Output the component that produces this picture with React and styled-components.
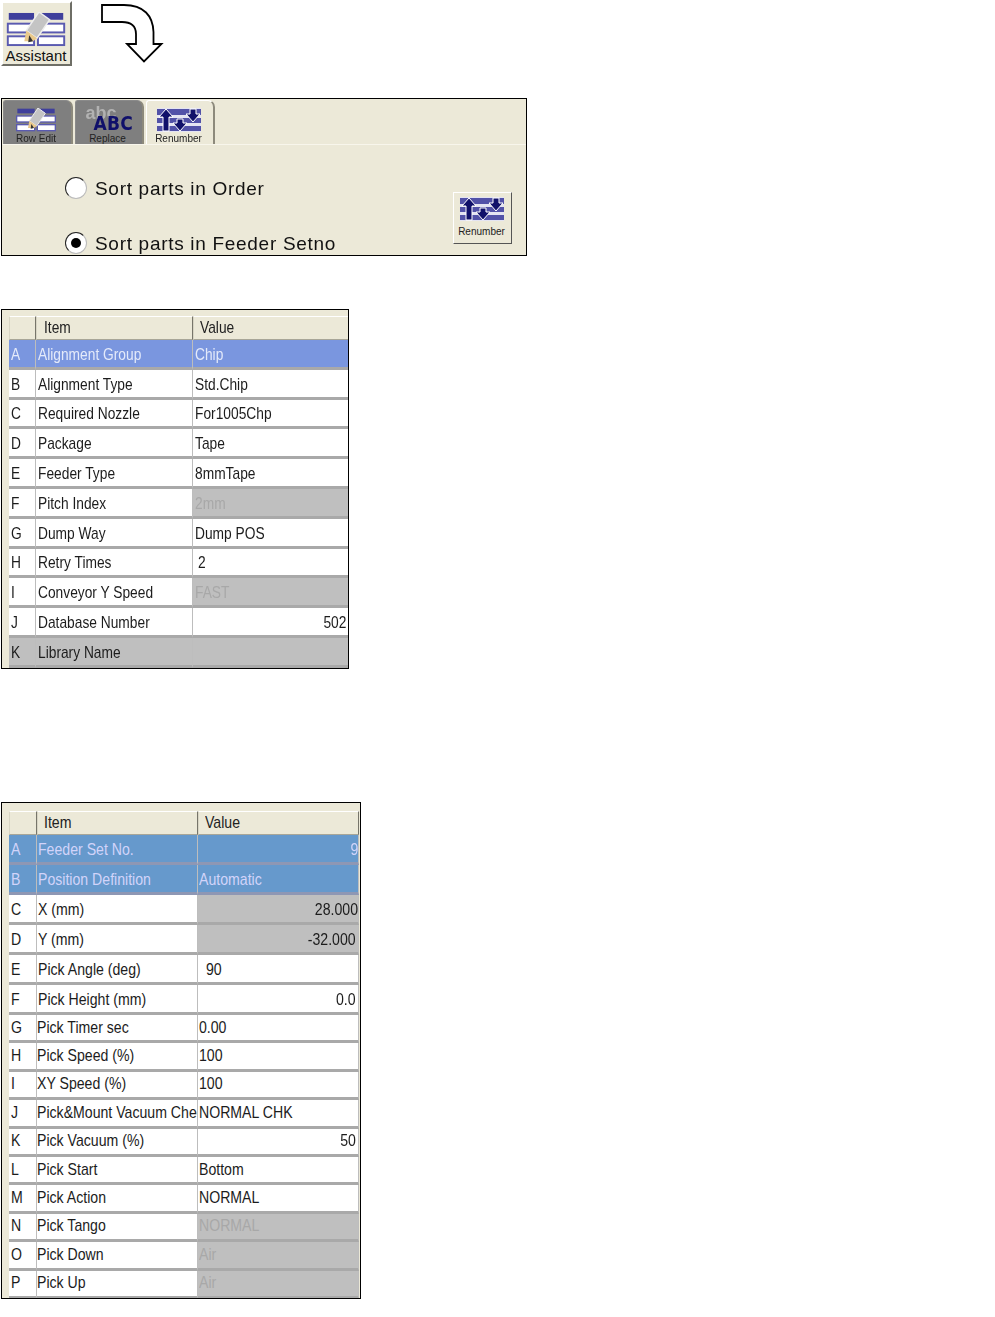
import React from 'react'
import styled, { createGlobalStyle } from 'styled-components'

const GlobalStyle = createGlobalStyle`
  html, body {
    margin: 0;
    padding: 0;
    background: #fff;
    font-family: "Liberation Sans", Arial, sans-serif;
  }
`

const Page = styled.div`
  width: 995px;
  height: 1317px;
  overflow: hidden;
  padding: 1px 0 0 1px;
  box-sizing: border-box;
  display: flex;
  flex-direction: column;
  align-items: flex-start;
  filter: blur(0.35px);
`

const TopRow = styled.div`
  display: flex;
  align-items: flex-start;
  gap: 28px;
  height: 65px;
  margin-bottom: 32px;
`

const AssistantButton = styled.div`
  width: 71px;
  height: 65px;
  box-sizing: border-box;
  background: #ece9d8;
  border: 2px solid;
  border-color: #fff #6e6e66 #6e6e66 #fff;
  display: flex;
  flex-direction: column;
  align-items: center;
  padding: 9px 1px 0 0;
  color: #111;
  font-size: 15px;
  line-height: 17px;
`

const ArrowWrap = styled.svg`
  display: block;
  margin-top: 1px;
`

const Panel = styled.div`
  width: 526px;
  height: 158px;
  box-sizing: border-box;
  border: 1px solid #000;
  background: #ece9d8;
  margin-bottom: 53px;
  overflow: hidden;
`

const TabBar = styled.div`
  height: 46px;
  box-sizing: border-box;
  padding: 2px 0 0 1px;
  display: flex;
  align-items: flex-end;
  gap: 2px;
  border-bottom: 1px solid #f8f6ec;
`

const Tab = styled.div`
  position: relative;
  width: ${p => p.$width}px;
  height: 44px;
  box-sizing: border-box;
  background: ${p => (p.$active ? '#ece9d8' : '#7f7f7f')};
  border-radius: 3px 7px 0 0;
  border-top: 1px solid ${p => (p.$active ? '#fff' : '#8a8a8a')};
  border-left: 1px solid ${p => (p.$active ? '#fff' : '#8a8a8a')};
  border-right: 2px solid #8d8a7c;
  display: flex;
  flex-direction: column;
  align-items: center;
  padding: 7px 3px 0 0;
  color: #222;
  font-size: 10px;
  line-height: 11px;
`

const TabIcon = styled.div`
  height: 24px;
  margin-bottom: 1px;
`

const AbcIcon = styled.div`
  position: relative;
  width: 54px;
  height: 24px;
  margin-bottom: 1px;
`

const AbcSmall = styled.span`
  position: absolute;
  left: 5px;
  top: -3px;
  font-size: 18px;
  line-height: 17px;
  font-weight: bold;
  color: #b2b2b2;
`

const AbcBig = styled.span`
  position: absolute;
  left: 13px;
  top: 5px;
  font-family: "DejaVu Sans Condensed", "DejaVu Sans", sans-serif;
  font-size: 19px;
  line-height: 20px;
  font-weight: bold;
  letter-spacing: 0.3px;
  color: #10106a;
`

const PanelBody = styled.div`
  display: flex;
  justify-content: space-between;
  padding: 32px 14px 0 63px;
`

const RadioList = styled.div`
  display: flex;
  flex-direction: column;
  gap: 33px;
`

const RadioRow = styled.div`
  display: flex;
  align-items: center;
  gap: 8px;
  height: 22px;
  font-size: 19px;
  letter-spacing: 0.7px;
  color: #111;
`

const RadioLabel = styled.span`
  position: relative;
  top: 1px;
`

const RadioCircle = styled.span`
  width: 22px;
  height: 22px;
  box-sizing: border-box;
  border-radius: 50%;
  background: #fff;
  border: 1.5px solid #222;
  border-bottom-color: #bbb;
  border-right-color: #bbb;
  display: flex;
  align-items: center;
  justify-content: center;
  &::after {
    content: '';
    display: ${p => (p.$checked ? 'block' : 'none')};
    width: 10px;
    height: 10px;
    border-radius: 50%;
    background: #000;
  }
`

const RenumberButton = styled.div`
  width: 59px;
  height: 52px;
  margin-top: 15px;
  box-sizing: border-box;
  background: #ece9d8;
  border: 1px solid;
  border-color: #fff #555 #555 #fff;
  display: flex;
  flex-direction: column;
  align-items: center;
  padding: 4px 2px 0 0;
  font-size: 10px;
  line-height: 11px;
  color: #222;
`

const ButtonIcon = styled.div`
  height: 24px;
  margin-bottom: 5px;
`

const TableFrame = styled.div`
  width: ${p => p.$width}px;
  height: ${p => p.$height}px;
  box-sizing: border-box;
  border: 1px solid #000;
  background: #ece9d8;
  padding: ${p => p.$padTop}px 0 0 ${p => p.$padLeft}px;
  margin-bottom: ${p => p.$gap}px;
  overflow: hidden;
`

const Row = styled.div`
  display: grid;
  grid-template-columns: ${p => p.$columns};
  height: ${p => p.$height}px;
`

const HeadCell = styled.div`
  box-sizing: border-box;
  background: #ece9d8;
  border: 1px solid;
  border-color: #fff #77756a #a8a698 #d8d5c4;
  padding-left: ${p => p.$pad}px;
  display: flex;
  align-items: center;
  font-size: 17px;
  color: #222;
`

const cellBg = {
  plain: '#fff',
  selected: '#7a96df',
  selectedAlt: '#6699cc',
  grey: '#bfbfbf',
}

const cellText = {
  plain: '#1c1c1c',
  selected: '#e4eafa',
  selectedAlt: '#d2d4fa',
  grey: '#1c1c1c',
  faded: '#a8a8a8',
}

const Cell = styled.div`
  box-sizing: border-box;
  background: ${p => cellBg[p.$tone]};
  color: ${p => cellText[p.$text || p.$tone]};
  border-right: 1px solid #bdbdbd;
  border-bottom: 3px solid ${p => (p.$tone === 'selectedAlt' ? '#8e97b4' : '#a9a9a9')};
  padding: ${p => p.$padTop}px ${p => p.$padRight ?? 2}px 0 ${p => p.$padLeft ?? 2}px;
  display: flex;
  align-items: center;
  justify-content: ${p => (p.$right ? 'flex-end' : 'flex-start')};
  font-size: 17px;
  white-space: nowrap;
  overflow: hidden;
`

// the screenshot's grid font is narrower than anything installed, so squeeze it
const Squeezed = styled.span`
  display: inline-block;
  flex: none;
  transform: scaleX(${p => p.$squeeze});
  transform-origin: ${p => (p.$right ? 'right' : 'left')} center;
`

const RenumberIcon = () => (
  <svg width="44" height="24" viewBox="0 0 44 24">
    <rect x="0" y="0" width="44" height="24" fill="#e4e4f2" />
    <rect x="0" y="1" width="44" height="6" fill="#5252a8" />
    <rect x="0" y="10" width="44" height="5" fill="#5252a8" />
    <rect x="0" y="18" width="44" height="5" fill="#5252a8" />
    <path d="M9 1 L16 9 L12 9 L12 23 L6 23 L6 9 L2 9 Z" fill="#10106a" stroke="#fff" strokeWidth="1" />
    <path d="M20 11 L26 11 L26 15 L30 15 L23 23 L16 15 L20 15 Z" fill="#10106a" stroke="#fff" strokeWidth="1" />
    <path d="M33 1 L39 1 L39 6 L43 6 L36 14 L29 6 L33 6 Z" fill="#10106a" stroke="#fff" strokeWidth="1" />
  </svg>
)

const EditIcon = ({ width, height }) => (
  <svg width={width} height={height} viewBox="0 0 60 36" style={{ display: 'block' }}>
    <rect x="2" y="1" width="26" height="7" fill="#3f3f9c" />
    <rect x="32" y="1" width="26" height="7" fill="#3f3f9c" />
    <rect x="1" y="12" width="27" height="9" fill="#fff" stroke="#5a5ab0" strokeWidth="2" />
    <rect x="32" y="12" width="27" height="9" fill="#fff" stroke="#5a5ab0" strokeWidth="2" />
    <rect x="1" y="25" width="27" height="9" fill="#fff" stroke="#5a5ab0" strokeWidth="2" />
    <rect x="32" y="25" width="27" height="9" fill="#fff" stroke="#5a5ab0" strokeWidth="2" />
    <path d="M33 0 L44 8 L31 27 L20 19 Z" fill="#c4c4c4" stroke="#eee" strokeWidth="1.5" />
    <path d="M20 19 L31 27 L27 30 L18 30 Z" fill="#eac98a" />
    <path d="M23 24 L27 30 L22 31 Z" fill="#333" />
  </svg>
)

const CurvedArrow = () => (
  <ArrowWrap width="66" height="62" viewBox="0 0 66 62">
    <path
      d="M2 3 L24 3 C44 3 53 14 53.5 30 L53.5 42 L61.5 42 L44 59.5 L27 42 L36 42 L36 32 C36 24 31 20 22 20 L2 20 Z"
      fill="#fff"
      stroke="#000"
      strokeWidth="1.8"
      strokeLinejoin="miter"
    />
  </ArrowWrap>
)

const partRows = [
  { key: 'A', item: 'Alignment Group', value: 'Chip', line: 'selected' },
  { key: 'B', item: 'Alignment Type', value: 'Std.Chip' },
  { key: 'C', item: 'Required Nozzle', value: 'For1005Chp' },
  { key: 'D', item: 'Package', value: 'Tape' },
  { key: 'E', item: 'Feeder Type', value: '8mmTape' },
  { key: 'F', item: 'Pitch Index', value: '2mm', off: true },
  { key: 'G', item: 'Dump Way', value: 'Dump POS' },
  { key: 'H', item: 'Retry Times', value: '2', padLeft: 5 },
  { key: 'I', item: 'Conveyor Y Speed', value: 'FAST', off: true },
  { key: 'J', item: 'Database Number', value: '502', right: true },
  { key: 'K', item: 'Library Name', value: '', line: 'grey' },
]

const feederRows = [
  { key: 'A', item: 'Feeder Set No.', value: '9', right: true, line: 'selectedAlt', padRight: 0, height: 30 },
  { key: 'B', item: 'Position Definition', value: 'Automatic', line: 'selectedAlt', height: 30 },
  { key: 'C', item: 'X (mm)', value: '28.000', right: true, greyValue: true, padRight: 0, height: 30 },
  { key: 'D', item: 'Y (mm)', value: '-32.000', right: true, greyValue: true, height: 30 },
  { key: 'E', item: 'Pick Angle (deg)', value: '90', padLeft: 8, height: 30 },
  { key: 'F', item: 'Pick Height (mm)', value: '0.0', right: true, height: 30 },
  { key: 'G', item: 'Pick Timer sec', value: '0.00', tight: true },
  { key: 'H', item: 'Pick Speed (%)', value: '100', tight: true },
  { key: 'I', item: 'XY Speed (%)', value: '100', tight: true },
  { key: 'J', item: 'Pick&Mount Vacuum Check', value: 'NORMAL CHK', tight: true },
  { key: 'K', item: 'Pick Vacuum (%)', value: '50', right: true, tight: true },
  { key: 'L', item: 'Pick Start', value: 'Bottom', tight: true },
  { key: 'M', item: 'Pick Action', value: 'NORMAL', tight: true },
  { key: 'N', item: 'Pick Tango', value: 'NORMAL', off: true, tight: true },
  { key: 'O', item: 'Pick Down', value: 'Air', off: true, tight: true },
  { key: 'P', item: 'Pick Up', value: 'Air', off: true, tight: true },
]

const DataRow = ({ row, columns, height, squeeze, textDrop, keyPad, itemPad, valuePad }) => {
  const line = row.line || 'plain'
  const valueTone = row.off || row.greyValue ? 'grey' : line
  const drop = row.tight ? 0 : textDrop
  return (
    <Row $columns={columns} $height={row.height || height}>
      <Cell $tone={line} $padTop={drop} $padLeft={keyPad}>
        <Squeezed $squeeze={squeeze}>{row.key}</Squeezed>
      </Cell>
      <Cell $tone={line} $padTop={drop} $padLeft={row.tight ? itemPad - 1 : itemPad}>
        <Squeezed $squeeze={squeeze}>{row.item}</Squeezed>
      </Cell>
      <Cell
        $tone={valueTone}
        $text={row.off ? 'faded' : undefined}
        $right={row.right}
        $padTop={drop}
        $padLeft={row.padLeft ?? valuePad}
        $padRight={row.padRight}
      >
        <Squeezed $squeeze={squeeze} $right={row.right}>{row.value}</Squeezed>
      </Cell>
    </Row>
  )
}

const DataTable = ({ rows, columns, rowHeight, width, height, padTop, padLeft, gap, headPad, valueHeadPad, squeeze, textDrop, keyPad, itemPad, valuePad }) => (
  <TableFrame $width={width} $height={height} $padTop={padTop} $padLeft={padLeft} $gap={gap}>
    <Row $columns={columns} $height={24}>
      <HeadCell />
      <HeadCell $pad={headPad}><Squeezed $squeeze={squeeze}>Item</Squeezed></HeadCell>
      <HeadCell $pad={valueHeadPad}><Squeezed $squeeze={squeeze}>Value</Squeezed></HeadCell>
    </Row>
    {rows.map(row => (
      <DataRow
        key={row.key}
        row={row}
        columns={columns}
        height={rowHeight}
        squeeze={squeeze}
        textDrop={textDrop}
        keyPad={keyPad}
        itemPad={itemPad}
        valuePad={valuePad}
      />
    ))}
  </TableFrame>
)

const App = () => (
  <Page>
    <GlobalStyle />
    <TopRow>
      <AssistantButton>
        <EditIcon width={60} height={36} />
        Assistant
      </AssistantButton>
      <CurvedArrow />
    </TopRow>

    <Panel>
      <TabBar>
        <Tab $width={70}>
          <TabIcon><EditIcon width={44} height={24} /></TabIcon>
          Row Edit
        </Tab>
        <Tab $width={69}>
          <AbcIcon>
            <AbcSmall>abc</AbcSmall>
            <AbcBig>ABC</AbcBig>
          </AbcIcon>
          Replace
        </Tab>
        <Tab $width={69} $active>
          <TabIcon><RenumberIcon /></TabIcon>
          Renumber
        </Tab>
      </TabBar>
      <PanelBody>
        <RadioList>
          <RadioRow><RadioCircle /><RadioLabel>Sort parts in Order</RadioLabel></RadioRow>
          <RadioRow><RadioCircle $checked /><RadioLabel>Sort parts in Feeder Setno</RadioLabel></RadioRow>
        </RadioList>
        <RenumberButton>
          <ButtonIcon><RenumberIcon /></ButtonIcon>
          Renumber
        </RenumberButton>
      </PanelBody>
    </Panel>

    <DataTable
      rows={partRows}
      columns="27px 157px 156px"
      rowHeight={29.8}
      width={348}
      height={360}
      padTop={6}
      padLeft={7}
      gap={133}
      headPad={7}
      valueHeadPad={6}
      squeeze={0.81}
      textDrop={3}
      keyPad={2}
      itemPad={2}
      valuePad={2}
    />

    <DataTable
      rows={feederRows}
      columns="28px 161px 161px"
      rowHeight={28.4}
      width={360}
      height={497}
      padTop={8}
      padLeft={7}
      gap={0}
      headPad={6}
      valueHeadPad={6}
      squeeze={0.83}
      textDrop={2}
      keyPad={2}
      itemPad={1}
      valuePad={1}
    />
  </Page>
)

export default App
